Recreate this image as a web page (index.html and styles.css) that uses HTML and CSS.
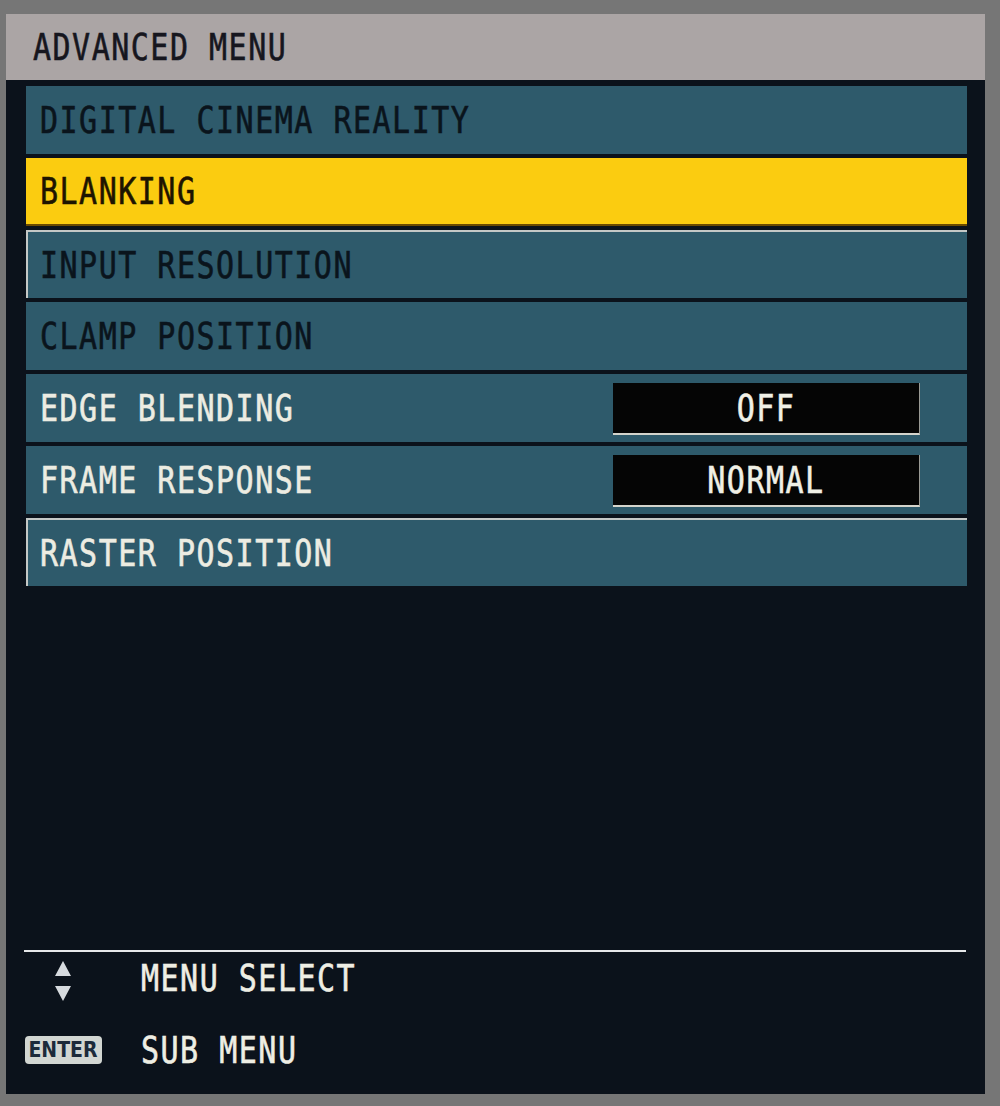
FILE: index.html
```html
<!DOCTYPE html>
<html lang="en">
<head>
    <meta charset="UTF-8">
    <meta name="viewport" content="width=device-width, initial-scale=1.0">
    <title>Advanced Menu</title>
    <link rel="stylesheet" href="styles.css">
</head>
<body>
    <div class="osd">
        <div class="osd-header"><span class="txt">ADVANCED MENU</span></div>
        <ul class="menu">
            <li class="item dim"><span class="txt">DIGITAL CINEMA REALITY</span></li>
            <li class="item selected"><span class="txt">BLANKING</span></li>
            <li class="item dim lit"><span class="txt">INPUT RESOLUTION</span></li>
            <li class="item dim"><span class="txt">CLAMP POSITION</span></li>
            <li class="item">
                <span class="txt">EDGE BLENDING</span>
                <div class="value"><span class="txt">OFF</span></div>
            </li>
            <li class="item">
                <span class="txt">FRAME RESPONSE</span>
                <div class="value"><span class="txt">NORMAL</span></div>
            </li>
            <li class="item lit"><span class="txt">RASTER POSITION</span></li>
        </ul>
        <div class="footer">
            <div class="hint">
                <div class="key">
                    <svg width="18" height="42" viewBox="0 0 18 42">
                        <polygon points="9,1 17,16 1,16" fill="#d6dade"/>
                        <polygon points="1,26 17,26 9,41" fill="#d6dade"/>
                    </svg>
                </div>
                <span class="txt">MENU SELECT</span>
            </div>
            <div class="hint">
                <div class="key"><span class="enter">ENTER</span></div>
                <span class="txt">SUB MENU</span>
            </div>
        </div>
    </div>
</body>
</html>
```

FILE: styles.css
```css
body {
    margin: 0;
    background: #767676;
    height: 1106px;
    padding-top: 14px;
    box-sizing: border-box;
}
.osd {
    margin: 0 15px 0 6px;
    height: 1080px;
    background: #0b121b;
    display: flex;
    flex-direction: column;
    font-family: "DejaVu Sans Mono", monospace;
    font-size: 30px;
    letter-spacing: 1.5px;
}
.txt {
    display: inline-block;
    transform: scaleY(1.25);
    line-height: 30px;
    white-space: pre;
    -webkit-text-stroke: 0.5px currentColor;
}
.osd-header {
    height: 66px;
    background: #aba5a5;
    color: #16161e;
    display: flex;
    align-items: center;
    padding-left: 27px;
}
.menu {
    list-style: none;
    margin: 0;
    padding: 6px 18px 0 20px;
    display: flex;
    flex-direction: column;
    gap: 4px;
}
.item {
    height: 68px;
    box-sizing: border-box;
    background: #2e5a6b;
    color: #ecece2;
    display: flex;
    align-items: center;
    justify-content: space-between;
    padding-left: 14px;
}
.item.dim {
    color: #0a141c;
}
.item.lit {
    border-top: 2px solid #c4c8c6;
    border-left: 2px solid #c4c8c6;
    padding-left: 12px;
}
.item.selected {
    background: #fbcc10;
    color: #1e1400;
    border-bottom: 2px solid #6a4a00;
}
.value {
    width: 307px;
    height: 52px;
    box-sizing: border-box;
    margin-right: 47px;
    margin-top: 1px;
    background: #050505;
    border-bottom: 2px solid #d4d4cc;
    border-right: 1px solid #9a9a94;
    display: flex;
    align-items: center;
    justify-content: center;
    color: #f0f0e6;
}
.footer {
    margin: auto 19px 0 18px;
    border-top: 2px solid #e6e8ea;
    padding-bottom: 18px;
    display: flex;
    flex-direction: column;
    gap: 20px;
}
.hint {
    height: 52px;
    display: flex;
    align-items: center;
    color: #eeeee4;
}
.key {
    width: 80px;
    margin-left: -1px;
    margin-right: 38px;
    display: flex;
    justify-content: center;
}
.hint:first-child .key {
    margin-top: 6px;
}
.enter {
    display: block;
    width: 77px;
    height: 28px;
    box-sizing: border-box;
    background: #d2d6d2;
    border-radius: 4px;
    color: #1c2a3a;
    font-family: "DejaVu Sans Condensed", "DejaVu Sans", sans-serif;
    font-weight: bold;
    font-size: 21px;
    letter-spacing: 0;
    line-height: 28px;
    text-align: center;
}
```
